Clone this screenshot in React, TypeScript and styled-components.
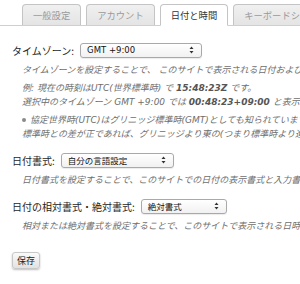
import React from "react";
import styled, { createGlobalStyle } from "styled-components";

const Global = createGlobalStyle`
  html, body { margin: 0; padding: 0; background: #fff; }
  body {
    width: 300px; height: 284px; overflow: hidden;
    font-family: "DejaVu Sans", "Noto Sans CJK JP", sans-serif;
    color: #222;
  }
`;

const Page = styled.div`
  width: 300px;
  height: 284px;
  overflow: hidden;
`;

const TabBar = styled.div`
  display: flex;
  align-items: flex-end;
  gap: 5px;
  height: 26px;
  padding-left: 22px;
  border-bottom: 1px solid #cfcfcf;
  box-sizing: border-box;
  white-space: nowrap;
`;

const Tab = styled.div<{ $active?: boolean }>`
  flex: none;
  height: ${(p) => (p.$active ? "22px" : "21px")};
  margin-bottom: ${(p) => (p.$active ? "-1px" : "0")};
  padding: 0 10px;
  box-sizing: border-box;
  display: flex;
  align-items: center;
  font-family: "Noto Sans CJK JP", sans-serif;
  font-size: 9.3px;
  color: ${(p) => (p.$active ? "#333" : "#9a9a9a")};
  background: ${(p) => (p.$active ? "#fff" : "linear-gradient(#f0f0f0, #e4e4e4)")};
  border: 1px solid #c4c4c4;
  border-bottom: ${(p) => (p.$active ? "1px solid #fff" : "none")};
  border-radius: 4px 4px 0 0;
`;

const Content = styled.div`
  padding: 16px 12px 0 12px;
`;

const Field = styled.div<{ $first?: boolean }>`
  margin-top: ${(p) => (p.$first ? "0" : "11px")};
`;

const Row = styled.div`
  display: flex;
  align-items: center;
  height: 16px;
  gap: 6px;
  white-space: nowrap;
`;

const Label = styled.label`
  font-family: "Noto Sans CJK JP", sans-serif;
  font-size: 10px;
  color: #1e1e1e;
`;

const SelectBox = styled.div<{ $w: number }>`
  width: ${(p) => p.$w}px;
  height: 15px;
  box-sizing: border-box;
  display: flex;
  align-items: center;
  justify-content: space-between;
  padding: 0 7px 0 6px;
  border: 1px solid #a9a9a9;
  border-radius: 3px;
  background: linear-gradient(#ffffff, #f1f1f1);
  box-shadow: 0 1px 1px rgba(0, 0, 0, 0.08);
  font-size: 8.5px;
  color: #111;
`;

const Desc = styled.div`
  margin-top: 5px;
  padding-left: 10px;
  font-size: 9px;
  font-style: italic;
  color: #6e6e6e;
  white-space: nowrap;
`;

const Para = styled.p`
  margin: 0 0 4px 0;
  line-height: 14px;
  &:last-child { margin-bottom: 0; }
`;

const Strong = styled.b`
  color: #555;
  font-weight: bold;
`;

const Bullet = styled.span`
  display: inline-block;
  width: 4px;
  height: 4px;
  border-radius: 50%;
  background: #8a8a8a;
  margin-right: 4px;
  vertical-align: 1px;
`;

const SaveButton = styled.button`
  margin-top: 19px;
  height: 17px;
  padding: 0 4px;
  font-family: "Noto Sans CJK JP", sans-serif;
  font-size: 9px;
  color: #222;
  border: 1px solid #c8c8c8;
  border-radius: 3px;
  background: linear-gradient(#fafafa, #e2e2e2);
  box-shadow: 0 1px 2px rgba(0, 0, 0, 0.25);
  display: flex;
  align-items: center;
`;

const Arrows = () => (
  <svg width="5" height="8" viewBox="0 0 5 8">
    <path d="M2.5 0.5 L4.5 3 L0.5 3 Z M2.5 7.5 L4.5 5 L0.5 5 Z" fill="#333" />
  </svg>
);

const Select = ({ value, w }: { value: string; w: number }) => (
  <SelectBox $w={w}>
    <span>{value}</span>
    <Arrows />
  </SelectBox>
);

export default function App() {
  return (
    <Page>
      <Global />
      <TabBar>
        <Tab>一般設定</Tab>
        <Tab>アカウント</Tab>
        <Tab $active>日付と時間</Tab>
        <Tab>キーボードショートカット</Tab>
      </TabBar>
      <Content>
        <Field $first>
          <Row>
            <Label>タイムゾーン:</Label>
            <Select value="GMT +9:00" w={122} />
          </Row>
          <Desc>
            <Para>タイムゾーンを設定することで、 このサイトで表示される日付および時刻が調整されます。</Para>
            <Para>
              例: 現在の時刻はUTC(世界標準時) で <Strong>15:48:23Z</Strong> です。
              <br />
              選択中のタイムゾーン GMT +9:00 では <Strong>00:48:23+09:00</Strong> と表示されます。
            </Para>
            <Para>
              <Bullet />協定世界時(UTC)はグリニッジ標準時(GMT)としても知られています。
              <br />
              標準時との差が正であれば、グリニッジより東の(つまり標準時より進んでいる)地域です。
            </Para>
          </Desc>
        </Field>
        <Field>
          <Row>
            <Label>日付書式:</Label>
            <Select value="自分の言語設定" w={113} />
          </Row>
          <Desc>
            <Para>日付書式を設定することで、このサイトでの日付の表示書式と入力書式が変わります。</Para>
          </Desc>
        </Field>
        <Field>
          <Row>
            <Label>日付の相対書式・絶対書式:</Label>
            <Select value="絶対書式" w={86} />
          </Row>
          <Desc>
            <Para>相対または絶対書式を設定することで、このサイトで表示される日時の書式が変わります。</Para>
          </Desc>
        </Field>
        <SaveButton>保存</SaveButton>
      </Content>
    </Page>
  );
}
